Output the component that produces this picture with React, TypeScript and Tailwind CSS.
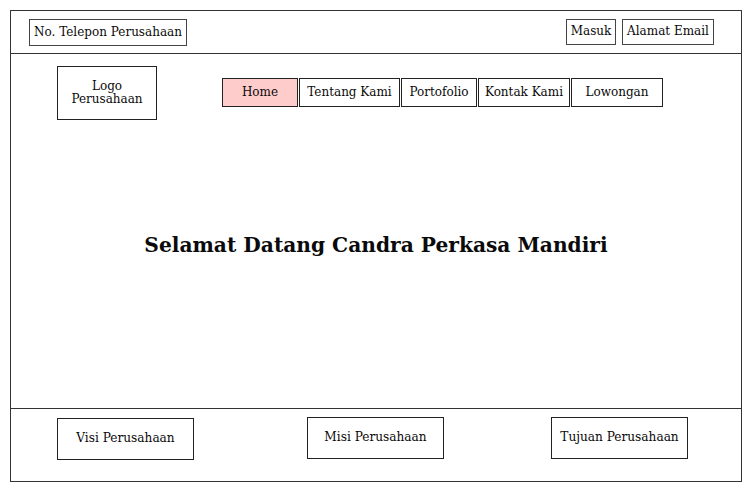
const serif = { fontFamily: '"DejaVu Serif", "Liberation Serif", serif' };

const navItems = [
	{ label: "Home", w: "w-[76px]", active: true },
	{ label: "Tentang Kami", w: "w-[101px]" },
	{ label: "Portofolio", w: "w-[76px]" },
	{ label: "Kontak Kami", w: "w-[92px]" },
	{ label: "Lowongan", w: "w-[92px]" },
];

const footerBoxes = [
	{ label: "Visi Perusahaan", ml: "ml-[46px]", mt: "mt-[9px]" },
	{ label: "Misi Perusahaan", ml: "ml-[113px]", mt: "mt-[8px]" },
	{ label: "Tujuan Perusahaan", ml: "ml-[107px]", mt: "mt-[8px]" },
];

export default function App() {
	return (
		<div className="w-[751px] h-[490px] bg-white text-[#0a0a0a]" style={serif}>
			<div className="ml-[10px] mt-[10px] w-[732px] h-[472px] border border-[#333] flex flex-col">
				<header className="h-[43px] border-b border-[#333] flex items-center justify-between pl-[18px] pr-[27px]">
					<div className="w-[158px] h-[27px] border border-[#444] flex items-center justify-center pb-[1px] text-[12px]">
						No. Telepon Perusahaan
					</div>
					<div className="flex gap-[6px]">
						<div className="w-[50px] h-[26px] border border-[#444] flex items-center justify-center pb-[2px] text-[12px]">
							Masuk
						</div>
						<div className="w-[92px] h-[26px] border border-[#444] flex items-center justify-center pb-[2px] text-[12px]">
							Alamat Email
						</div>
					</div>
				</header>

				<main className="flex-1 flex flex-col">
					<div className="flex items-start pl-[46px] pt-[12px]">
						<div className="w-[100px] h-[54px] border border-[#222] flex items-center justify-center text-center text-[12px] leading-[13px]">
							Logo
							<br />
							Perusahaan
						</div>
						<nav className="flex gap-[1px] ml-[65px] mt-[12px]">
							{navItems.map((item) => (
								<div
									key={item.label}
									className={`${item.w} h-[29px] border border-[#222] flex items-center justify-center pb-[2px] text-[12px] ${
										item.active ? "bg-[#ffcccc]" : "bg-white"
									}`}
								>
									{item.label}
								</div>
							))}
						</nav>
					</div>
					<h1 className="mt-[110px] text-center text-[20.2px] font-bold">
						Selamat Datang Candra Perkasa Mandiri
					</h1>
				</main>

				<footer className="h-[73px] border-t border-[#333] flex items-start">
					{footerBoxes.map((box) => (
						<div
							key={box.label}
							className={`${box.ml} ${box.mt} w-[137px] h-[42px] border border-[#222] flex items-center justify-center pb-[3px] text-[13.5px]`}
							style={{ fontStretch: "condensed" }}
						>
							{box.label}
						</div>
					))}
				</footer>
			</div>
		</div>
	);
}
